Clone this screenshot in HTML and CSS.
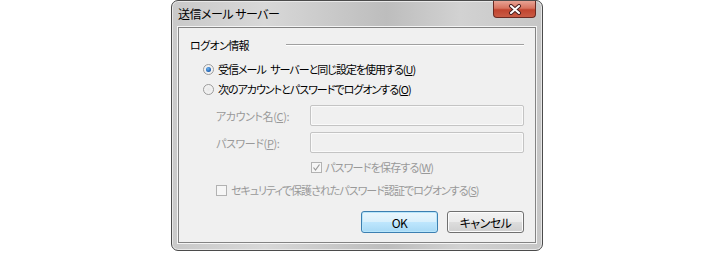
FILE: index.html
```html
<!DOCTYPE html>
<html lang="ja">
<head>
    <meta charset="UTF-8">
    <title>送信メール サーバー</title>
    <link rel="stylesheet" href="styles.css">
</head>
<body>
    <div class="window">
        <div class="titlebar">
            <span class="title">送信メール サーバー</span>
            <div class="close">
                <svg width="14" height="11" viewBox="0 0 14 11">
                    <path d="M3 2 L11 9 M11 2 L3 9" stroke="#4a2020" stroke-width="4" stroke-linecap="round"/>
                    <path d="M3 2 L11 9 M11 2 L3 9" stroke="#fff" stroke-width="2" stroke-linecap="round"/>
                </svg>
            </div>
        </div>
        <div class="client">
            <div class="group-head">
                <span>ログオン情報</span>
                <div class="rule"></div>
            </div>

            <div class="option">
                <span class="radio checked"></span>
                <span>受信メール&ensp;サーバーと同じ設定を使用する(<u>U</u>)</span>
            </div>
            <div class="option">
                <span class="radio"></span>
                <span>次のアカウントとパスワードでログオンする(<u>O</u>)</span>
            </div>

            <div class="field">
                <label>アカウント名(<u>C</u>):</label>
                <div class="input"></div>
            </div>
            <div class="field">
                <label>パスワード(<u>P</u>):</label>
                <div class="input"></div>
            </div>

            <div class="save">
                <span class="check ticked">
                    <svg width="9" height="9" viewBox="0 0 9 9">
                        <path d="M1.5 4.5 L3.5 7 L7.5 1.5" fill="none" stroke="#9a9a9a" stroke-width="1.2"/>
                    </svg>
                </span>
                <span>パスワードを保存する(<u>W</u>)</span>
            </div>

            <div class="spa">
                <span class="check"></span>
                <span>セキュリティで保護されたパスワード認証でログオンする(<u>S</u>)</span>
            </div>

            <div class="buttons">
                <div class="btn default">OK</div>
                <div class="btn">キャンセル</div>
            </div>
        </div>
    </div>
</body>
</html>
```

FILE: styles.css
```css
body {
    margin: 0;
    background: #fff;
    font-family: "Noto Sans CJK JP", sans-serif;
    font-size: 11px;
    letter-spacing: -1px;
    font-feature-settings: "palt";
    color: #000;
    white-space: nowrap;
}
.window {
    width: 372px;
    height: 251px;
    margin-left: 171px;
    border: 1px solid #4b4b4b;
    border-radius: 7px;
    background: linear-gradient(90deg, #c9c9c9 0%, #d8d8d8 25%, #bdbdbd 58%, #d2d2d2 78%, #c6c6c6 100%);
    box-shadow: inset 0 0 0 1px #e8e8e8;
    padding: 0 6px 7px 6px;
    box-sizing: border-box;
    display: flex;
    flex-direction: column;
}
.titlebar {
    height: 26px;
    display: flex;
    justify-content: space-between;
    align-items: flex-start;
}
.title {
    padding-top: 5px;
    font-size: 12px;
    letter-spacing: -0.5px;
    line-height: 16px;
}
.close {
    width: 43px;
    height: 17px;
    border: 1px solid #6b2a22;
    border-top: none;
    border-radius: 0 0 4px 4px;
    background: linear-gradient(#e8a394 0%, #d8735f 45%, #c1442f 55%, #c95b45 100%);
    box-sizing: border-box;
    display: flex;
    align-items: center;
    justify-content: center;
}
.client {
    flex: 1;
    background: #f0f0f0;
    border: 1px solid #838383;
    box-shadow: 0 0 0 1px #f4f4f4;
    padding: 8px 11px 0 11px;
}
.group-head {
    display: flex;
    align-items: center;
    height: 18px;
    letter-spacing: -0.6px;
}
.rule {
    width: 238px;
    margin-left: auto;
    border-top: 1px solid #a0a0a0;
    border-bottom: 1px solid #fff;
}
.option {
    display: flex;
    align-items: center;
    height: 20px;
    margin-left: 13px;
}
.group-head + .option {
    margin-top: 5px;
}
.radio {
    width: 11px;
    height: 11px;
    border-radius: 50%;
    border: 1px solid #9b9b9b;
    background: radial-gradient(circle, #e8e8e8 0%, #f8f8f8 100%);
    box-sizing: border-box;
    margin-right: 4px;
    position: relative;
}
.radio.checked::after {
    content: "";
    position: absolute;
    left: 2px;
    top: 2px;
    width: 5px;
    height: 5px;
    border-radius: 50%;
    background: radial-gradient(circle at 40% 35%, #6fb6f0 0%, #1a5cb0 70%, #0e3f82 100%);
}
.field {
    display: flex;
    align-items: center;
    margin-left: 26px;
    margin-top: 6px;
    color: #999;
    letter-spacing: -0.4px;
}
.option + .field {
    margin-top: 6px;
}
.field label {
    width: 95px;
}
.input {
    width: 215px;
    height: 21px;
    border: 1px solid #c4c4c4;
    border-radius: 2px;
    background: #f0f0f0;
    box-shadow: inset 0 0 0 1px #fafafa;
    box-sizing: border-box;
}
.save {
    display: flex;
    align-items: center;
    margin-left: 121px;
    margin-top: 6px;
    height: 16px;
    color: #999;
    letter-spacing: -0.8px;
}
.check {
    width: 11px;
    height: 11px;
    border: 1px solid #b2b2b2;
    background: #f6f6f6;
    box-sizing: border-box;
    margin-right: 3px;
    display: flex;
    align-items: center;
    justify-content: center;
}
.spa {
    display: flex;
    align-items: center;
    margin-left: 26px;
    margin-top: 7px;
    height: 16px;
    color: #999;
}
.spa .check {
    margin-right: 4px;
}
.buttons {
    display: flex;
    justify-content: flex-end;
    gap: 9px;
    margin-top: 13px;
}
.btn {
    width: 77px;
    height: 22px;
    border: 1px solid #707070;
    border-radius: 3px;
    box-sizing: border-box;
    background: linear-gradient(#f2f2f2 0%, #ebebeb 48%, #dddddd 52%, #cfcfcf 100%);
    box-shadow: inset 0 0 0 1px #fcfcfc;
    display: flex;
    align-items: center;
    justify-content: center;
    font-size: 12px;
    letter-spacing: -0.5px;
}
.btn.default {
    border-color: #3c7fb1;
    background: linear-gradient(#eaf6fd 0%, #d9f0fc 48%, #bee6fd 52%, #a7d9f5 100%);
    box-shadow: inset 0 0 0 1px #b8e6fb;
}
```
